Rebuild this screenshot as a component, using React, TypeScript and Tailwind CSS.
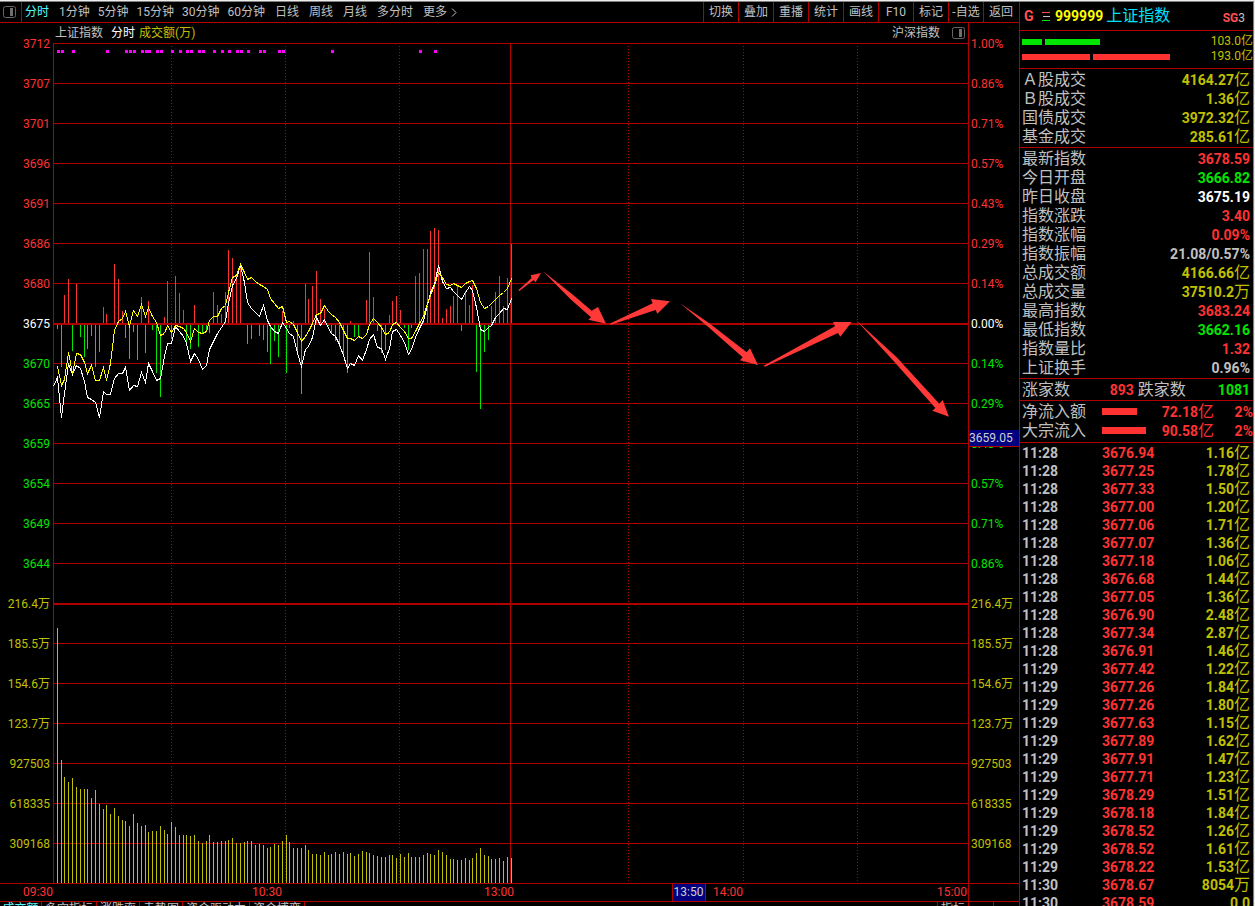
import React from "react";

const RED = "#ff3232";
const GREEN = "#00e600";
const GRID = "#b00000";

const minutePeriods = ["1分钟", "5分钟", "15分钟", "30分钟", "60分钟"];
const longPeriods = ["日线", "周线", "月线", "多分时"];
const tools = ["切换", "叠加", "重播", "统计", "画线", "F10", "标记", "-自选", "返回"];

const priceLabels = ["3712", "3707", "3701", "3696", "3691", "3686", "3680", "3675", "3670", "3665", "3659", "3654", "3649", "3644"];
const percentLabels = ["1.00%", "0.86%", "0.71%", "0.57%", "0.43%", "0.29%", "0.14%", "0.00%", "0.14%", "0.29%", "0.43%", "0.57%", "0.71%", "0.86%"];
const volumeLabels = ["216.4万", "185.5万", "154.6万", "123.7万", "927503", "618335", "309168"];

// Buying (positive) and selling (negative) strength per minute, in pixels.
const strength = [
  -5, -43, 28, 44, -27, 39, -13, -33, -25, -12, -43, -28, 16, 9, -1, 59, 44, 12, -14, -35, -8, -36, 26, -29, 22, -6, -49, -73, 6, 42,
  -15, 47, 30, 13, -18, -25, 18, -23, -10, -8, -9, 31, 18, 9, 31, 73, 65, 49, 59, -1, -20, -15, -1, -12, -16, -28, -40, -17, -33, 12,
  -49, -4, 2, -30, -70, 39, 24, 37, 52, 24, 14, -2, -9, -17, -23, -33, -49, 2, -13, -13, -1, 23, 71, 26, -7, -29, -26, 8, 22, 27,
  13, -4, -26, -4, 47, 50, 74, 74, 92, 95, 93, 5, 14, 17, 27, 37, -7, 32, 18, 38, -48, -85, -28, -16, 17, 31, 47, 17, 45, 79,
];

// Depth of each line below the upper reference level, in thirds of a pixel.
const indexLine = [
  470, 592, 520, 430, 462, 434, 445, 483, 530, 538, 546, 592, 514, 523, 523, 474, 458, 460, 440, 511, 496, 498, 455, 487, 428, 453, 480, 475, 408, 370,
  368, 318, 333, 348, 368, 424, 400, 418, 447, 436, 386, 362, 340, 320, 303, 250, 195, 175, 135, 185, 245, 265, 277, 289, 256, 300, 317, 333, 338, 305,
  325, 340, 348, 400, 438, 388, 378, 350, 290, 314, 298, 325, 340, 349, 372, 405, 444, 430, 435, 404, 421, 388, 356, 343, 382, 383, 418, 385, 333, 328,
  346, 365, 403, 388, 350, 325, 300, 255, 215, 192, 136, 183, 205, 202, 214, 226, 236, 216, 199, 210, 262, 328, 333, 320, 314, 292, 280, 265, 268, 235,
];
const averageLine = [
  438, 496, 478, 397, 458, 400, 401, 425, 460, 436, 481, 481, 440, 481, 428, 330, 304, 293, 274, 317, 271, 287, 251, 287, 262, 287, 307, 345, 340, 314,
  336, 314, 317, 323, 335, 363, 325, 337, 340, 334, 300, 287, 289, 265, 254, 215, 170, 164, 133, 157, 178, 172, 184, 192, 197, 207, 235, 248, 265, 257,
  306, 304, 311, 335, 363, 347, 332, 308, 282, 279, 256, 273, 283, 291, 306, 330, 354, 355, 361, 349, 355, 343, 312, 295, 307, 320, 343, 336, 312, 305,
  320, 332, 355, 355, 332, 308, 288, 250, 225, 195, 156, 172, 193, 196, 190, 194, 202, 188, 182, 179, 205, 246, 265, 259, 249, 238, 226, 217, 205, 175,
];

const volume = [
  255, 123, 106, 101, 105, 96, 94, 94, 94, 85, 93, 79, 74, 78, 69, 75, 67, 63, 62, 57, 69, 60, 57, 58, 51, 52, 52, 57, 53, 49,
  61, 56, 48, 48, 48, 47, 48, 42, 40, 42, 48, 41, 41, 42, 42, 43, 45, 40, 40, 41, 42, 42, 38, 39, 38, 35, 36, 39, 38, 42,
  48, 41, 35, 35, 35, 38, 33, 29, 29, 28, 31, 28, 29, 31, 29, 31, 29, 30, 27, 29, 32, 31, 30, 28, 27, 26, 26, 28, 28, 25,
  29, 26, 30, 26, 26, 26, 28, 30, 29, 28, 33, 31, 28, 24, 24, 23, 23, 25, 23, 25, 30, 35, 28, 27, 24, 24, 25, 22, 26, 25,
];

const newsMarks = [
  57, 61, 72, 106, 125, 129, 133, 141, 145, 148, 156, 160, 171, 179, 186, 190, 198, 202, 213, 221, 228, 236, 240, 247, 259, 263, 278, 282,
  331, 419, 434,
];

const arrows = [
  "25,121 65,84 62,76 93,69 77,97 71,90 28,123",
  "99,64 185,131 245,182 264,171 288,221 235,209 243,202 180,146",
  "299,221 428,160 423,147 480,154 442,191 437,180 303,224",
  "510,160 600,221 710,307 720,295 744,345 690,331 698,322 595,231",
  "761,347 975,229 969,216 1025,216 991,260 984,249 765,350",
  "1038,210 1160,322 1288,461 1298,450 1317,500 1267,482 1276,474 1150,332",
];

const minuteX = (i: number) => Math.floor(57.35 + 3.8125 * i);
const toPoints = (values: number[]) => values.map((v, i) => `${minuteX(i) + 0.5},${Math.round(220 + v / 3) + 0.5}`).join(" ");

function Chart() {
  const rows = Array.from({ length: 21 }, (_, i) => 43 + i * 40);
  return (
    <svg className="block h-[840px] w-full" viewBox="53 43 915 840" preserveAspectRatio="none" role="img" aria-label="上证指数分时走势">
      <g shapeRendering="crispEdges">
        {rows.map((y) => (
          <rect key={y} x="53" y={y} width="915" height={y === 323 || y === 603 ? 2 : 1} fill={GRID} />
        ))}
        <rect x="53" y="43" width="1" height="840" fill={GRID} />
        {[171, 285, 399, 628, 743, 857].map((x) => (
          <line key={x} x1={x + 0.5} x2={x + 0.5} y1="46" y2="882" stroke={GRID} strokeDasharray="1 2" />
        ))}
        {newsMarks.map((x) => (
          <rect key={x} x={x} y="50" width="3" height="3" fill="#ff00ff" />
        ))}
        {strength.map((v, i) => (
          <rect key={i} x={minuteX(i)} y={v > 0 ? 323 - v : 324} width="1" height={Math.abs(v)} fill={v > 0 ? RED : GREEN} />
        ))}
        <rect x="53" y="323" width="915" height="2" fill={GRID} />
        {volume.map((v, i) => (
          <rect key={i} x={minuteX(i)} y={883 - v} width="1" height={v} fill="#c0c000" />
        ))}
        <rect x="510" y="43" width="1" height="840" fill={GRID} />
        <polyline points={`53.5,386.5 ${toPoints(indexLine)}`} fill="none" stroke="#fff" />
        <polyline points={toPoints(averageLine)} fill="none" stroke="#ff0" />
      </g>
      <g transform="translate(510 250) scale(0.33333)" fill="#ff3838">
        {arrows.map((p) => (
          <polygon key={p} points={p} />
        ))}
      </g>
    </svg>
  );
}

function PanelIcon() {
  return (
    <svg className="h-3 w-[13px] shrink-0" viewBox="0 0 13 12" aria-hidden="true">
      <rect x="0.5" y="0.5" width="12" height="11" rx="2" fill="none" stroke="#666" />
      <rect x="7" y="2" width="3" height="8" fill="#707070" />
    </svg>
  );
}

function tone(i: number) {
  return i < 7 ? "text-[#ff3232]" : i === 7 ? "text-white" : i < 14 ? "text-[#00e600]" : "text-[#c0c000]";
}

function Axis({ labels, side }: { labels: string[]; side: "left" | "right" }) {
  return (
    <ul className={side === "left" ? "pr-[3px] pt-px text-right" : "pl-0.5 pt-px text-left"}>
      {labels.map((t, i) => (
        <li key={i} className={`h-10 whitespace-nowrap leading-10 ${tone(i)}`}>
          {t}
        </li>
      ))}
    </ul>
  );
}

// Figures are bold; a trailing unit is set larger in the regular weight.
function Figure({ value }: { value: string }) {
  const unit = /[亿万]$/.test(value) ? value.slice(-1) : "";
  return (
    <span className="inline-flex items-center">
      <span className="text-sm font-bold leading-[18px]">{unit ? value.slice(0, -1) : value}</span>
      {unit && <span className="text-base font-normal leading-[18px]">{unit}</span>}
    </span>
  );
}

type Stat = [label: string, value: string, color: string];

const turnover: Stat[] = [
  ["Ａ股成交", "4164.27亿", "text-[#c0c000]"],
  ["Ｂ股成交", "1.36亿", "text-[#c0c000]"],
  ["国债成交", "3972.32亿", "text-[#c0c000]"],
  ["基金成交", "285.61亿", "text-[#c0c000]"],
];
const quote: Stat[] = [
  ["最新指数", "3678.59", "text-[#ff3232]"],
  ["今日开盘", "3666.82", "text-[#00e600]"],
  ["昨日收盘", "3675.19", "text-white"],
  ["指数涨跌", "3.40", "text-[#ff3232]"],
  ["指数涨幅", "0.09%", "text-[#ff3232]"],
  ["指数振幅", "21.08/0.57%", "text-[#c0c0c0]"],
  ["总成交额", "4166.66亿", "text-[#c0c000]"],
  ["总成交量", "37510.2万", "text-[#c0c000]"],
  ["最高指数", "3683.24", "text-[#ff3232]"],
  ["最低指数", "3662.16", "text-[#00e600]"],
  ["指数量比", "1.32", "text-[#ff3232]"],
  ["上证换手", "0.96%", "text-[#c0c0c0]"],
];

function Stats({ rows }: { rows: Stat[] }) {
  return (
    <dl className="border-b border-[#b00000] py-px pl-0.5 pr-[3px]">
      {rows.map(([label, value, color]) => (
        <div key={label} className="flex h-[19px] items-center justify-between">
          <dt className="text-base leading-[19px]">{label}</dt>
          <dd className={`flex ${color}`}>
            <Figure value={value} />
          </dd>
        </div>
      ))}
    </dl>
  );
}

const ticks: [string, string, string][] = [
  ["11:28", "3676.94", "1.16亿"],
  ["11:28", "3677.25", "1.78亿"],
  ["11:28", "3677.33", "1.50亿"],
  ["11:28", "3677.00", "1.20亿"],
  ["11:28", "3677.06", "1.71亿"],
  ["11:28", "3677.07", "1.36亿"],
  ["11:28", "3677.18", "1.06亿"],
  ["11:28", "3676.68", "1.44亿"],
  ["11:28", "3677.05", "1.36亿"],
  ["11:28", "3676.90", "2.48亿"],
  ["11:28", "3677.34", "2.87亿"],
  ["11:28", "3676.91", "1.46亿"],
  ["11:29", "3677.42", "1.22亿"],
  ["11:29", "3677.26", "1.84亿"],
  ["11:29", "3677.26", "1.80亿"],
  ["11:29", "3677.63", "1.15亿"],
  ["11:29", "3677.89", "1.62亿"],
  ["11:29", "3677.91", "1.47亿"],
  ["11:29", "3677.71", "1.23亿"],
  ["11:29", "3678.29", "1.51亿"],
  ["11:29", "3678.18", "1.84亿"],
  ["11:29", "3678.52", "1.26亿"],
  ["11:29", "3678.52", "1.61亿"],
  ["11:29", "3678.22", "1.53亿"],
  ["11:30", "3678.67", "8054万"],
  ["11:30", "3678.59", "0.0"],
];

function Sidebar() {
  return (
    <aside className="w-[234px] shrink-0 border-l border-[#b00000]">
      <header className="flex h-[29px] items-center border-b border-[#b00000] pl-1 pr-2">
        <span className="w-[18px] text-sm font-bold text-[#ff5050]">G</span>
        <svg className="h-[11px] w-2 shrink-0" viewBox="0 0 8 11" shapeRendering="crispEdges" aria-hidden="true">
          <rect x="0" y="1" width="8" height="1" fill="#ff5050" />
          <rect x="1" y="5" width="7" height="1" fill="#c0c0c0" />
          <rect x="0" y="9" width="8" height="1" fill="#00e600" />
        </svg>
        <span className="ml-[5px] text-sm font-bold text-[#ffff00]">999999</span>
        <h1 className="ml-[3px] text-base text-[#00e0ff]">上证指数</h1>
        <span className="ml-auto pt-1 text-xs">
          <b className="text-[#ff5050]">SG</b>3
        </span>
      </header>

      <div className="h-[38px] border-b border-[#b00000] pl-0.5 pt-[3px] text-xs text-[#c0c000]">
        <div className="flex h-[15px] items-center">
          <div className="mr-[3px] h-1.5 w-5 bg-[#00e600]" />
          <div className="h-1.5 w-[55px] bg-[#00e600]" />
          <span className="ml-auto leading-[15px]">103.0亿</span>
        </div>
        <div className="flex h-[15px] items-center">
          <div className="mr-[3px] h-1.5 w-[68px] bg-[#ff3232]" />
          <div className="h-1.5 w-[77px] bg-[#ff3232]" />
          <span className="ml-auto leading-[15px]">193.0亿</span>
        </div>
      </div>

      <Stats rows={turnover} />
      <Stats rows={quote} />

      <div className="flex h-[22px] items-center border-b border-[#b00000] pl-0.5 pr-[3px] text-base leading-5">
        <span>涨家数</span>
        <span className="ml-auto flex text-[#ff3232]">
          <Figure value="893" />
        </span>
        <span className="ml-1 mr-8">跌家数</span>
        <span className="flex text-[#00e600]">
          <Figure value="1081" />
        </span>
      </div>

      <div className="border-b border-[#b00000] pb-0.5 pl-0.5 pt-px">
        {[
          { label: "净流入额", bar: "w-[35px]", value: "72.18亿" },
          { label: "大宗流入", bar: "w-11", value: "90.58亿" },
        ].map((r) => (
          <div key={r.label} className="flex h-[19px] items-center text-[#ff3232]">
            <span className="w-20 text-base leading-[19px] text-[#c0c0c0]">{r.label}</span>
            <div className={`h-[7px] bg-[#ff3232] ${r.bar}`} />
            <span className="ml-auto flex">
              <Figure value={r.value} />
            </span>
            <span className="flex w-[39px] justify-end">
              <Figure value="2%" />
            </span>
          </div>
        ))}
      </div>

      <div className="pt-px">
        <table className="w-full table-fixed border-collapse" aria-label="分时成交">
          <tbody>
            {ticks.map(([time, price, amount], i) => (
              <tr key={i} className="h-[18px]">
                <td className="w-[82px] p-0 pl-0.5 align-top leading-[18px]">
                  <div className="flex h-[18px]">
                    <Figure value={time} />
                  </div>
                </td>
                <td className="p-0 align-top text-[#ff3232]">
                  <div className="flex h-[18px]">
                    <Figure value={price} />
                  </div>
                </td>
                <td className="p-0 pr-[3px] align-top text-[#c0c000]">
                  <div className="flex h-[18px] justify-end">
                    <Figure value={amount} />
                  </div>
                </td>
              </tr>
            ))}
          </tbody>
        </table>
      </div>
    </aside>
  );
}

function TimeAxis() {
  return (
    <div className="flex h-[18px] shrink-0 border-t border-[#b00000] leading-[17px] text-[#ff3232]">
      <div className="w-[53px] shrink-0 text-right">09:30</div>
      <div className="relative grid flex-1 grid-cols-[229fr_232fr_229fr_225fr] text-right">
        <span>10:30</span>
        <span>13:00</span>
        <span>14:00</span>
        <span className="pr-px">15:00</span>
        <span className="absolute left-[67.6%] top-0 h-[17px] w-[34px] border-x border-[#b00000] bg-[#000080] text-center leading-4 text-[#d0d0d0]">
          13:50
        </span>
      </div>
      <div className="w-[51px] shrink-0 border-l border-[#b00000]" />
    </div>
  );
}

export default function App() {
  const indicators = ["多空指标", "涨跌率", "走势图", "资金驱动力", "资金博弈"];
  return (
    <div className="h-screen overflow-hidden border-r border-t border-[#ececec] bg-black font-['Roboto','Noto_Sans_CJK_SC',sans-serif] text-xs text-[#c0c0c0]">
      <div className="flex h-full border-r border-t border-[#808080]">
        <main className="flex min-w-0 flex-1 flex-col">
          <nav className="flex h-[21px] shrink-0 border-b border-[#b00000] leading-5" aria-label="周期">
            <div className="flex w-[22px] shrink-0 items-center border-r border-[#b00000] pl-[3px]">
              <PanelIcon />
            </div>
            <div className="flex gap-2.5 whitespace-nowrap pl-[3px]">
              <button className="text-[#54fcfc]">分时</button>
              <div className="flex gap-2">
                {minutePeriods.map((p) => (
                  <button key={p}>{p}</button>
                ))}
              </div>
              {longPeriods.map((p) => (
                <button key={p}>{p}</button>
              ))}
              <button className="flex items-center gap-1">
                更多
                <svg className="h-[9px] w-1.5" viewBox="0 0 6 9" fill="none" stroke="#c0c0c0" aria-hidden="true">
                  <path d="M1 .5 5 4.5 1 8.5" />
                </svg>
              </button>
            </div>
            <div className="ml-auto flex pr-px">
              {tools.map((t) => (
                <button key={t} className="w-[35px] whitespace-nowrap border-l border-[#b00000] text-center">
                  {t}
                </button>
              ))}
            </div>
          </nav>

          <div className="flex shrink-0">
            <div className="w-[53px] shrink-0">
              <Axis side="left" labels={[...priceLabels, ...volumeLabels]} />
            </div>
            <div className="min-w-0 flex-1">
              <div className="flex h-5 items-center pl-0.5 pr-[3px] leading-5">
                <span className="mr-2">上证指数</span>
                <span className="mr-1 text-white">分时</span>
                <span className="text-[#c0c000]">成交额(万)</span>
                <span className="ml-auto mr-3">沪深指数</span>
                <PanelIcon />
              </div>
              <Chart />
            </div>
            <div className="relative w-[51px] shrink-0 border-l border-[#b00000]">
              <Axis side="right" labels={[...percentLabels, ...volumeLabels]} />
              <div className="absolute inset-x-0 top-[407px] h-[17px] border-b border-[#b00000] bg-[#000080] leading-4 text-[#d0d0d0]">3659.05</div>
            </div>
          </div>

          <TimeAxis />

          <div className="flex h-[15px] shrink-0 whitespace-nowrap border-t border-[#b00000] leading-[14px]">
            <button className="w-[42px] border-r border-[#b00000] text-[#54fcfc]">成交额</button>
            {indicators.map((t) => (
              <button key={t} className="border-r border-[#b00000] px-[3px]">
                {t}
              </button>
            ))}
            <button className="ml-auto w-8 border-x border-[#b00000]">指标</button>
            <div className="w-[25px] border-r border-[#b00000]" />
            <div className="w-[25px]" />
          </div>
        </main>
        <Sidebar />
      </div>
    </div>
  );
}
